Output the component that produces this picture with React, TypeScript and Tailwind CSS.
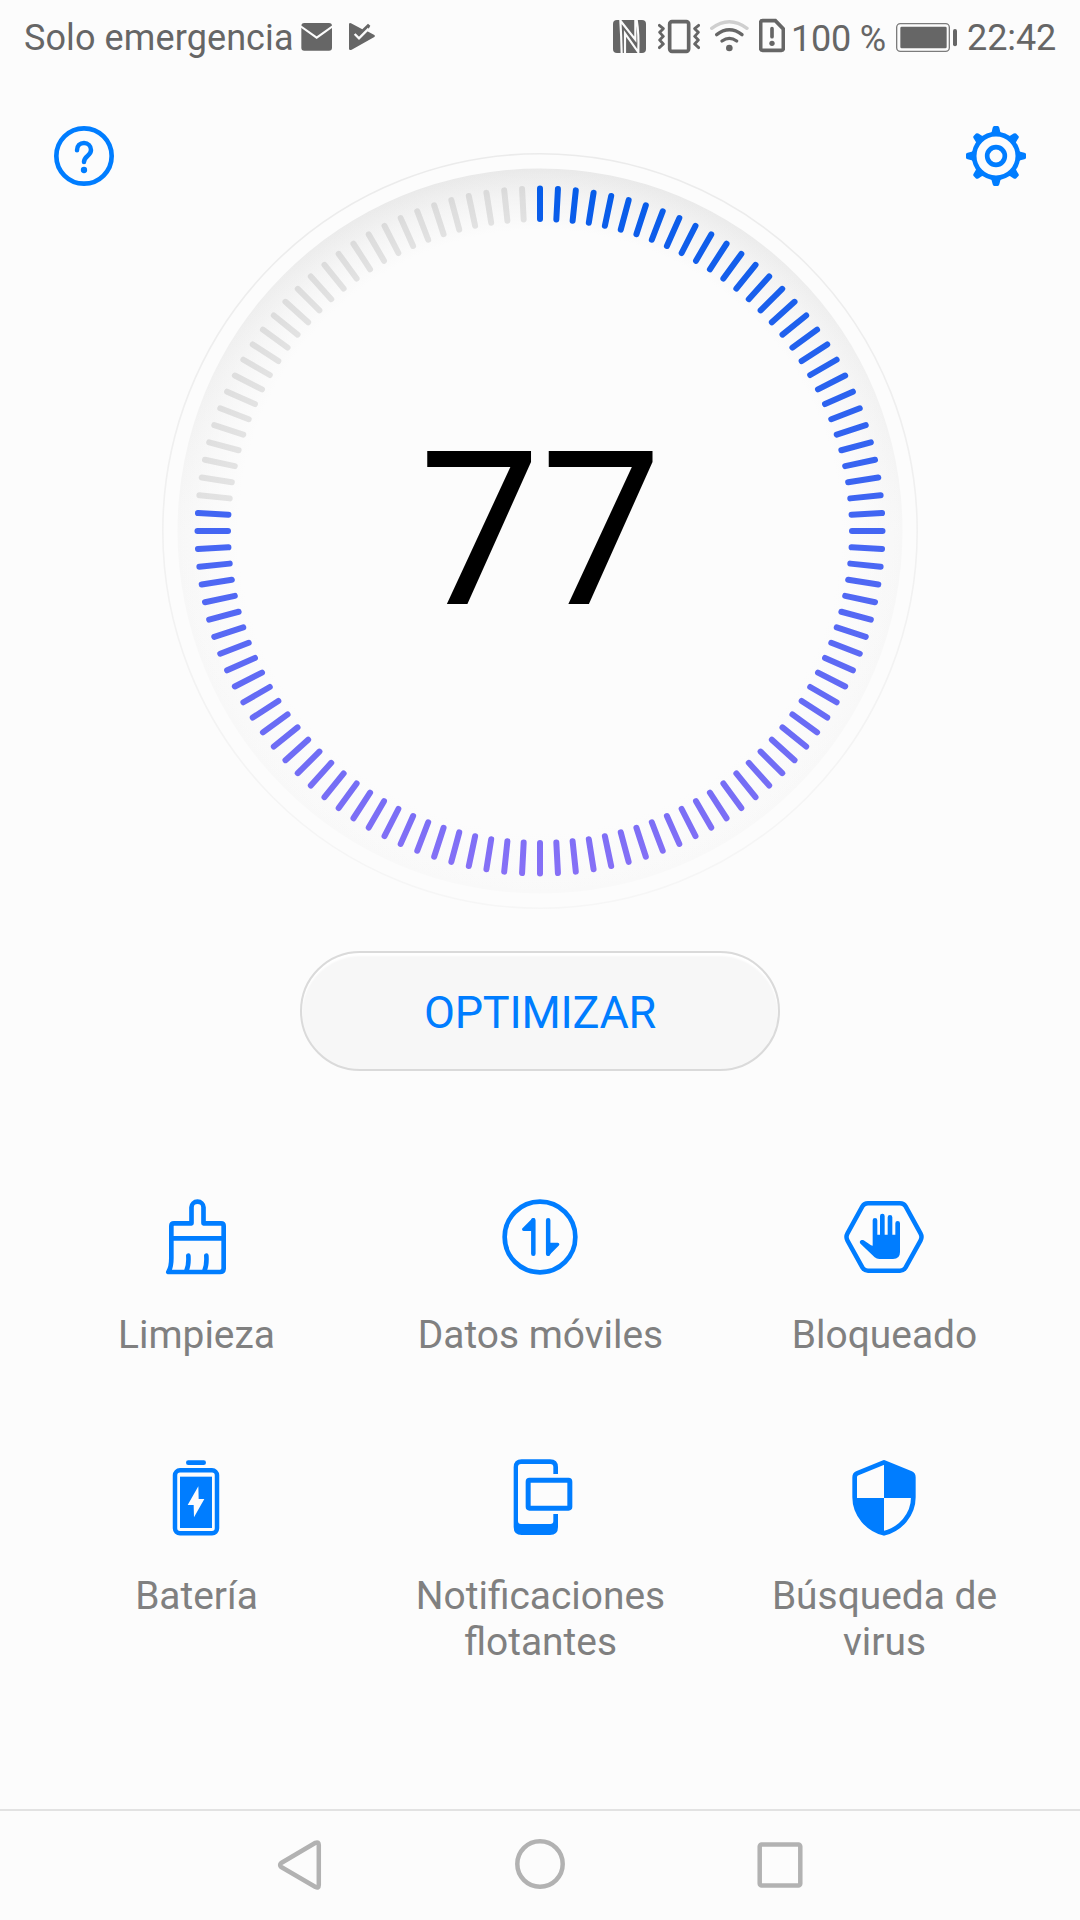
import React from "react";

const BLUE = "#007dff";
const GREY = "#666666";

function StatusBar() {
  return (
    <header className="flex h-[75px] items-center pl-[24px] text-[36px] leading-[75px] text-[#666666]">
      <span className="w-[277px] whitespace-nowrap pt-[2px] tracking-[0.1px]">Solo emergencia</span>
      <svg className="h-[75px] w-[31px]" viewBox="903 0 93 225">
        <rect x="904" y="69" width="92" height="83" rx="9" fill={GREY} />
        <path d="M902 79 L950 113 L998 79" fill="none" stroke="#fcfcfc" strokeWidth="6" />
      </svg>
      <svg className="ml-[17px] h-[75px] w-[27px]" viewBox="1047 0 81 225">
        <path
          d="M1047 72 Q1048 68 1053 70 L1087 88 L1104 71 L1111 77 L1102 94 L1123 105 Q1127 108 1123 111 L1055 149 Q1048 152 1047 147 Z"
          fill={GREY}
        />
        <path d="M1064 102 L1077 115 L1106 86" fill="none" stroke="#fcfcfc" strokeWidth="7" />
      </svg>
      <svg className="ml-[237px] h-[75px] w-[33px]" viewBox="39 0 99 225">
        <rect x="39" y="60" width="99" height="99" rx="12" fill={GREY} />
        <path
          d="M61 60 Q64 110 65 159 M62 63 L106 119 V60 M75 159 V100 L115 157 Q117 100 110 60"
          fill="none"
          stroke="#fcfcfc"
          strokeWidth="6.500"
        />
      </svg>
      <svg className="ml-[12px] h-[75px] w-[42px]" viewBox="174 0 126 225" fill="none" stroke={GREY} strokeLinecap="round" strokeLinejoin="round">
        <rect x="209" y="65" width="57" height="89" rx="7" strokeWidth="11" />
        <path
          d="M178 76 L190 86 L179 97 L190 109 L179 120 L190 132 L178 143 M296 76 L284 86 L295 97 L284 109 L295 120 L284 132 L296 143"
          strokeWidth="8.500"
        />
      </svg>
      <svg className="ml-[10px] h-[75px] w-[39px]" viewBox="330 0 117 225" fill="none" strokeLinecap="round" strokeWidth="10">
        <path d="M335 85 Q388 45 441 85" stroke="#cfcfcf" />
        <path d="M350 104 Q388 75 426 104" stroke={GREY} />
        <path d="M366 123 Q388 107 410 123" stroke={GREY} />
        <circle cx="388" cy="144" r="10" fill={GREY} stroke="none" />
      </svg>
      <svg className="ml-[10px] h-[75px] w-[26px]" viewBox="477 0 78 225" fill="none" stroke={GREY}>
        <path d="M488 62 H526 L550 87 V145 Q550 151 544 151 H488 Q482 151 482 145 V68 Q482 62 488 62 Z" strokeWidth="11" />
        <path d="M516 86 V110" strokeWidth="11" strokeLinecap="round" />
        <circle cx="516" cy="130" r="8" fill={GREY} stroke="none" />
      </svg>
      <span className="ml-[6px] w-[105px] whitespace-nowrap pt-[3px] tracking-[-0.2px]">100 %</span>
      <svg className="h-[75px] w-[61px]" viewBox="887 0 183 225">
        <rect x="889" y="71" width="158" height="83" rx="11" fill="none" stroke="#7c7c7c" strokeWidth="4" />
        <rect x="900" y="80" width="139" height="65" rx="4" fill={GREY} />
        <rect x="1058" y="87" width="12" height="52" rx="6" fill={GREY} />
      </svg>
      <span className="ml-[10px] whitespace-nowrap pt-[2px] tracking-[-0.1px]">22:42</span>
    </header>
  );
}

function HelpIcon() {
  return (
    <svg className="mt-[51px] h-[60px] w-[60px]" viewBox="162 378 180 180" fill="none" stroke={BLUE}>
      <circle cx="252" cy="468" r="83" strokeWidth="14" />
      <path
        d="M231 451 C231 437 240 429 252 429 C264 429 273 438 273 450 C273 468 252 468 252 486"
        strokeWidth="13.500"
        strokeLinecap="round"
      />
      <circle cx="252" cy="510" r="9.5" fill={BLUE} stroke="none" />
    </svg>
  );
}

function GearIcon() {
  return (
    <svg className="mt-[51px] h-[60px] w-[60px]" viewBox="-90 -90 180 180" fill="none" stroke={BLUE}>
      <circle r="65.5" strokeWidth="14" />
      <circle r="26.5" strokeWidth="14" />
      {[0, 45, 90, 135, 180, 225, 270, 315].map((a) => (
        <path
          key={a}
          d="M-17 -66 Q-12 -71 -10 -85 Q-9 -90 -5 -90 H5 Q9 -90 10 -85 Q12 -71 17 -66 Z"
          fill={BLUE}
          stroke="none"
          transform={`rotate(${a})`}
        />
      ))}
    </svg>
  );
}

const TICKS = 120;
const SCORE = 77;

function Gauge() {
  const active = Math.floor((TICKS * SCORE) / 100);
  return (
    <div className="mt-[78px] grid h-[756px] w-[756px] place-items-center">
      <svg className="col-start-1 row-start-1 h-[756px] w-[756px]" viewBox="-378 -378 756 756">
        <defs>
          <linearGradient id="shade" x1="0" y1="0" x2="0" y2="1">
            <stop offset="0" stopColor="#e9e9e9" />
            <stop offset="0.5" stopColor="#f7f7f7" />
            <stop offset="1" stopColor="#f9f9f9" />
          </linearGradient>
          <radialGradient id="fade">
            <stop offset="0.83" stopColor="#fcfcfc" />
            <stop offset="0.92" stopColor="#fcfcfc" stopOpacity="0.55" />
            <stop offset="1" stopColor="#fcfcfc" stopOpacity="0" />
          </radialGradient>
          <linearGradient id="rim" x1="0" y1="0" x2="0" y2="1">
            <stop offset="0" stopColor="#ebebeb" />
            <stop offset="1" stopColor="#f6f6f6" />
          </linearGradient>
          <linearGradient id="arc" gradientUnits="userSpaceOnUse" x1="0" y1="-345" x2="0" y2="345">
            <stop offset="0" stopColor="#055ce9" />
            <stop offset="0.5" stopColor="#4466f3" />
            <stop offset="1" stopColor="#8770f6" />
          </linearGradient>
          <mask id="ticks" maskUnits="userSpaceOnUse" x="-378" y="-378" width="756" height="756">
            {Array.from({ length: active }, (_, i) => (
              <rect key={i} x="-3" y="-345.5" width="6" height="36.5" rx="3" fill="#fff" transform={`rotate(${i * 3})`} />
            ))}
          </mask>
        </defs>
        <circle r="377.2" fill="none" stroke="url(#rim)" strokeWidth="1.6" />
        <circle r="362.5" fill="url(#shade)" />
        <circle r="363" fill="url(#fade)" />
        {Array.from({ length: TICKS - active }, (_, i) => (
          <rect
            key={i}
            x="-3"
            y="-345.5"
            width="6"
            height="36.5"
            rx="3"
            fill="#000"
            fillOpacity="0.095"
            transform={`rotate(${(active + i) * 3})`}
          />
        ))}
        <rect x="-378" y="-378" width="756" height="756" fill="url(#arc)" mask="url(#ticks)" />
      </svg>
      <span className="col-start-1 row-start-1 pl-[1px] text-[216px] leading-[216px] text-black">{SCORE}</span>
    </div>
  );
}

function BrushIcon() {
  return (
    <svg className="h-[80px] w-[80px]" viewBox="168 51 240 240" fill="none" stroke={BLUE} strokeWidth="14" strokeLinecap="round" strokeLinejoin="round">
      <path d="M274.500 130 V82 A18 17 0 0 1 310.500 82 V130 H363 Q371 130 371 138 V265 Q371 276 360 276 H205 Q214 262 214 235 V138 Q214 130 222 130 Z" stroke="none" />
      <path d="M274.500 130 H222 Q214 130 214 138 V235 Q214 262 205 276 H360 Q371 276 371 265 V138 Q371 130 363 130 H310.500 V82 A18 17 0 0 0 274.500 82 V130" />
      <path d="M214 175 H371 M265 227 Q267 256 259 273 M319 227 Q321 256 313 273" />
    </svg>
  );
}

function DataIcon() {
  return (
    <svg className="h-[80px] w-[80px]" viewBox="300 51 240 240" fill="none" stroke={BLUE} strokeLinecap="round" strokeLinejoin="round">
      <circle cx="420" cy="171" r="106" strokeWidth="14" />
      <path d="M400 121 V221 M444.500 121 V221" strokeWidth="13.500" />
      <path d="M371 148 L400 119 V148 Z M473 193 L444 222 V193 Z" fill={BLUE} strokeWidth="10" />
    </svg>
  );
}

function BlockIcon() {
  return (
    <svg className="h-[80px] w-[80px]" viewBox="312 51 240 240" fill="none">
      <path
        d="M384 69.500 H480 Q491 69.500 497 79 L541.500 160 Q547.500 171 541.500 182 L497 262 Q491 272 480 272 H384 Q373 272 367 262 L322.500 182 Q316.500 171 322.500 160 L367 79 Q373 69.500 384 69.500 Z"
        stroke={BLUE}
        strokeWidth="13.500"
      />
      <path
        d="M398 197 V121 A7 7 0 0 1 412 121 V164 H420 V108 A7 7 0 0 1 434 108 V164 H443 V112 A7 7 0 0 1 457 112 V164 H466 V130 A7 7 0 0 1 480 130 V216 Q480 237 459 237 H418 Q410 237 404 232 L363 193 C355 186 362 177 371 181 L393 196 Z"
        fill={BLUE}
      />
    </svg>
  );
}

function BatteryIcon() {
  return (
    <svg className="h-[80px] w-[80px]" viewBox="168 54 240 240" fill={BLUE}>
      <rect x="258" y="61" width="60" height="14" rx="7" />
      <rect x="225" y="91" width="126" height="189" rx="15" fill="none" stroke={BLUE} strokeWidth="13.500" />
      <rect x="240" y="110" width="96" height="154" />
      <path d="M295 139 L296 177 H313 L282 232 L281 195 H263 Z" fill="#fcfcfc" />
    </svg>
  );
}

function FloatIcon() {
  return (
    <svg className="h-[80px] w-[80px]" viewBox="300 54 240 240" fill={BLUE}>
      <path d="M474 102 V82 Q474 58 450 58 H365 Q341 58 341 82 V261 Q341 285 365 285 H450 Q474 285 474 261 V222 H460 V243 Q460 252 451 252 H363 Q354 252 354 243 V81 Q354 72 363 72 H451 Q460 72 460 81 V102 Z" />
      <rect x="384.500" y="121" width="125" height="83.500" rx="4" fill="none" stroke={BLUE} strokeWidth="15" />
    </svg>
  );
}

function ShieldIcon() {
  return (
    <svg className="h-[80px] w-[80px]" viewBox="312 54 240 240" fill={BLUE}>
      <path
        d="M432 67 L513 100 Q520 103 520 112 V172 C520 225 480 268 432 280 C384 268 344 225 344 172 V112 Q344 103 351 100 Z"
        fill="none"
        stroke={BLUE}
        strokeWidth="14"
        strokeLinejoin="round"
      />
      <path d="M432 67 L513 100 Q520 103 520 112 V174 H432 Z M432 280 C384 268 344 225 344 174 H432 Z" />
    </svg>
  );
}

const FEATURES = [
  { label: "Limpieza", Icon: BrushIcon },
  { label: "Datos móviles", Icon: DataIcon },
  { label: "Bloqueado", Icon: BlockIcon },
  { label: "Batería", Icon: BatteryIcon },
  { label: "Notificaciones flotantes", Icon: FloatIcon },
  { label: "Búsqueda de virus", Icon: ShieldIcon },
];

function NavBar() {
  return (
    <nav className="mt-auto flex h-[111px] justify-between border-t-2 border-[#e2e2e2] px-[274px]">
      <svg className="h-[109px] w-[52px]" viewBox="274 1811 52 109" fill="none" stroke="#b2b2b2" strokeWidth="4.500" strokeLinejoin="round">
        <path d="M281.200 1863 L315.500 1842.800 Q318.800 1841.500 318.800 1845 V1885 Q318.800 1888.500 315.500 1887 L281.200 1867 Q279 1865 281.200 1863 Z" />
      </svg>
      <svg className="h-[109px] w-[52px]" viewBox="514 1811 52 109" fill="none" stroke="#b2b2b2" strokeWidth="4.500">
        <circle cx="540" cy="1864" r="22.700" />
      </svg>
      <svg className="h-[109px] w-[52px]" viewBox="754 1811 52 109" fill="none" stroke="#b2b2b2" strokeWidth="4.500">
        <rect x="759.700" y="1844.500" width="40.600" height="41" rx="2" />
      </svg>
    </nav>
  );
}

export default function App() {
  return (
    <div className="flex h-[1920px] w-[1080px] flex-col overflow-hidden bg-[#fcfcfc] font-[Roboto,sans-serif]">
      <StatusBar />
      <section className="flex items-start justify-between px-[54px]">
        <HelpIcon />
        <Gauge />
        <GearIcon />
      </section>
      <button className="mx-auto mt-[42px] h-[120px] w-[480px] rounded-full border-2 border-[#dadada] bg-[#f7f7f7] pt-[4px] text-[45px] tracking-[-0.25px] text-[#007dff] shadow-[inset_0_3px_2px_#ffffff]">
        OPTIMIZAR
      </button>
      <section className="mt-[126px] grid auto-rows-[261px] grid-cols-3 px-[24px]">
        {FEATURES.map(({ label, Icon }) => (
          <div key={label} className="flex flex-col items-center gap-[35px]">
            <Icon />
            <span className="w-[264px] pl-[1px] text-center text-[38.9px] leading-[46px] text-[#808080]">{label}</span>
          </div>
        ))}
      </section>
      <NavBar />
    </div>
  );
}
